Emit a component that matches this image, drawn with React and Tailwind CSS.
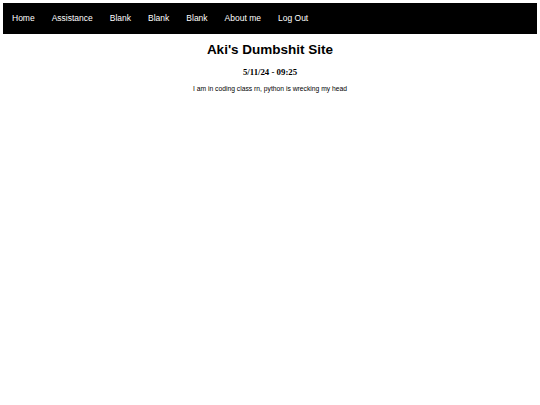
import React from 'react';

const links = ['Home', 'Assistance', 'Blank', 'Blank', 'Blank', 'About me', 'Log Out'];

export default function App() {
  return (
    <div className="min-h-screen bg-white p-[3px] font-['Liberation_Sans',Arial,sans-serif] text-black">
      {/* Top nav */}
      <nav className="flex h-[31px] items-center gap-[17px] bg-black pl-[9px]">
        {links.map((label, i) => (
          <a key={i} href="#" className="text-[8.5px] leading-none text-white">
            {label}
          </a>
        ))}
      </nav>

      <main className="text-center">
        <h1 className="mt-[8px] text-[13.5px] font-bold leading-[16px]">Aki's Dumbshit Site</h1>
        <h3 className="mt-[9px] font-['Liberation_Serif','Times_New_Roman',serif] text-[8.8px] font-bold leading-[10px]">
          5/11/24 - 09:25
        </h3>
        <p className="mt-[8px] text-[6.75px] leading-[8px]">
          I am in coding class rn, python is wrecking my head
        </p>
      </main>
    </div>
  );
}
